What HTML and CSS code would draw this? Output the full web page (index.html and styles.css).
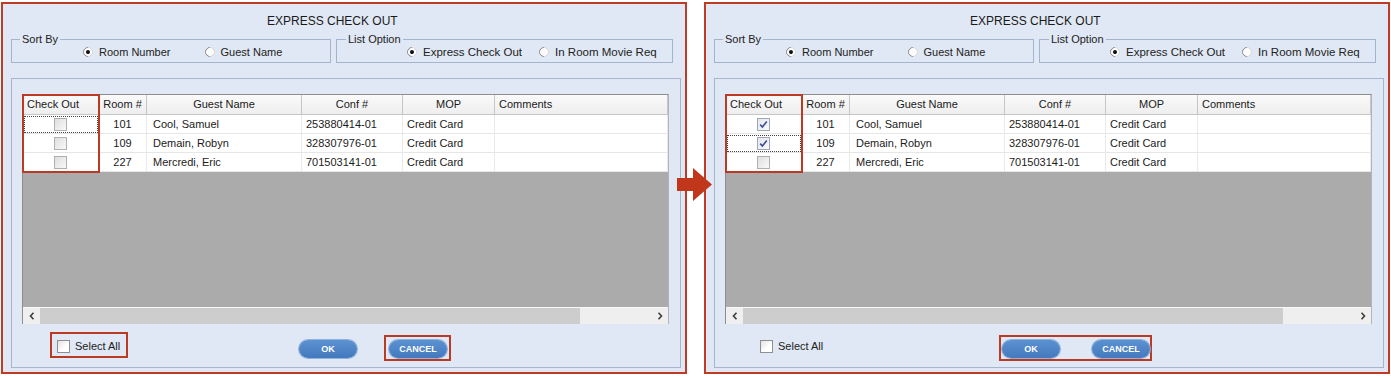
FILE: index.html
```html
<!DOCTYPE html>
<html>
<head>
<meta charset="utf-8">
<title>Express Check Out</title>
<link rel="stylesheet" href="styles.css">
</head>
<body>
<div class="stage">
  <section class="panel">
    <div class="title">EXPRESS CHECK OUT</div>
    <div class="options">
      <fieldset class="group sort">
        <legend>Sort By</legend>
        <div class="radios">
          <span class="radio"><span class="dot on"></span>Room Number</span>
          <span class="radio"><span class="dot"></span>Guest Name</span>
        </div>
      </fieldset>
      <fieldset class="group list">
        <legend>List Option</legend>
        <div class="radios">
          <span class="radio"><span class="dot on"></span>Express Check Out</span>
          <span class="radio"><span class="dot"></span>In Room Movie Req</span>
        </div>
      </fieldset>
    </div>
    <div class="body">
      <div class="grid">
        <div class="row head">
          <div class="cell left">Check Out</div>
          <div class="cell">Room #</div>
          <div class="cell">Guest Name</div>
          <div class="cell">Conf #</div>
          <div class="cell">MOP</div>
          <div class="cell left">Comments</div>
        </div>
        <div class="row">
          <div class="cell chk focus"><span class="box"></span></div>
          <div class="cell num">101</div>
          <div class="cell txt">Cool, Samuel</div>
          <div class="cell txt">253880414-01</div>
          <div class="cell txt">Credit Card</div>
          <div class="cell txt"></div>
        </div>
        <div class="row">
          <div class="cell chk"><span class="box"></span></div>
          <div class="cell num">109</div>
          <div class="cell txt">Demain, Robyn</div>
          <div class="cell txt">328307976-01</div>
          <div class="cell txt">Credit Card</div>
          <div class="cell txt"></div>
        </div>
        <div class="row">
          <div class="cell chk"><span class="box"></span></div>
          <div class="cell num">227</div>
          <div class="cell txt">Mercredi, Eric</div>
          <div class="cell txt">701503141-01</div>
          <div class="cell txt">Credit Card</div>
          <div class="cell txt"></div>
        </div>
        <div class="empty"></div>
        <div class="hscroll">
          <span class="sb-btn"><svg width="6" height="8" viewBox="0 0 6 8"><polyline points="4.5,0.8 1.5,4 4.5,7.2" fill="none" stroke="#3c3c3c" stroke-width="1.6"/></svg></span>
          <span class="thumb"></span>
          <span class="track"></span>
          <span class="sb-btn"><svg width="6" height="8" viewBox="0 0 6 8"><polyline points="1.5,0.8 4.5,4 1.5,7.2" fill="none" stroke="#3c3c3c" stroke-width="1.6"/></svg></span>
        </div>
        <div class="mark"></div>
      </div>
      <div class="footer">
        <label class="selall marked"><span class="cb"></span>Select All</label>
        <span class="btn ok-solo">OK</span>
        <span class="btnwrap marked single"><span class="btn">CANCEL</span></span>
      </div>
    </div>
  </section>

  <svg class="arrow" width="36" height="35" viewBox="0 0 36 35"><path d="M0 11 H16 V1 L35 17.5 L16 34 V24 H0 Z" fill="#c1371c"/></svg>

  <section class="panel second">
    <div class="title">EXPRESS CHECK OUT</div>
    <div class="options">
      <fieldset class="group sort">
        <legend>Sort By</legend>
        <div class="radios">
          <span class="radio"><span class="dot on"></span>Room Number</span>
          <span class="radio"><span class="dot"></span>Guest Name</span>
        </div>
      </fieldset>
      <fieldset class="group list">
        <legend>List Option</legend>
        <div class="radios">
          <span class="radio"><span class="dot on"></span>Express Check Out</span>
          <span class="radio"><span class="dot"></span>In Room Movie Req</span>
        </div>
      </fieldset>
    </div>
    <div class="body">
      <div class="grid">
        <div class="row head">
          <div class="cell left">Check Out</div>
          <div class="cell">Room #</div>
          <div class="cell">Guest Name</div>
          <div class="cell">Conf #</div>
          <div class="cell">MOP</div>
          <div class="cell left">Comments</div>
        </div>
        <div class="row">
          <div class="cell chk"><span class="box checked"><svg width="11" height="11" viewBox="0 0 11 11"><polyline points="2.2,5.6 4.4,8 8.8,2.6" fill="none" stroke="#3b4c9b" stroke-width="1.6"/></svg></span></div>
          <div class="cell num">101</div>
          <div class="cell txt">Cool, Samuel</div>
          <div class="cell txt">253880414-01</div>
          <div class="cell txt">Credit Card</div>
          <div class="cell txt"></div>
        </div>
        <div class="row">
          <div class="cell chk focus"><span class="box checked"><svg width="11" height="11" viewBox="0 0 11 11"><polyline points="2.2,5.6 4.4,8 8.8,2.6" fill="none" stroke="#3b4c9b" stroke-width="1.6"/></svg></span></div>
          <div class="cell num">109</div>
          <div class="cell txt">Demain, Robyn</div>
          <div class="cell txt">328307976-01</div>
          <div class="cell txt">Credit Card</div>
          <div class="cell txt"></div>
        </div>
        <div class="row">
          <div class="cell chk"><span class="box"></span></div>
          <div class="cell num">227</div>
          <div class="cell txt">Mercredi, Eric</div>
          <div class="cell txt">701503141-01</div>
          <div class="cell txt">Credit Card</div>
          <div class="cell txt"></div>
        </div>
        <div class="empty"></div>
        <div class="hscroll">
          <span class="sb-btn"><svg width="6" height="8" viewBox="0 0 6 8"><polyline points="4.5,0.8 1.5,4 4.5,7.2" fill="none" stroke="#3c3c3c" stroke-width="1.6"/></svg></span>
          <span class="thumb"></span>
          <span class="track"></span>
          <span class="sb-btn"><svg width="6" height="8" viewBox="0 0 6 8"><polyline points="1.5,0.8 4.5,4 1.5,7.2" fill="none" stroke="#3c3c3c" stroke-width="1.6"/></svg></span>
        </div>
        <div class="mark"></div>
      </div>
      <div class="footer">
        <label class="selall"><span class="cb"></span>Select All</label>
        <span class="btnwrap marked pair"><span class="btn">OK</span><span class="btn">CANCEL</span></span>
      </div>
    </div>
  </section>
</div>
</body>
</html>
```

FILE: styles.css
```css
body {
  margin: 0;
  background: #ffffff;
  font-family: "Liberation Sans", Arial, sans-serif;
  color: #1b1b1b;
}

.stage {
  position: relative;
  display: flex;
  gap: 17px;
  padding: 2px 0 0 1px;
}

.panel {
  box-sizing: border-box;
  width: 686px;
  height: 372px;
  border: 2px solid #bf3b25;
  background: #dfe8f4;
  padding: 10px 0 0 8px;
}

.title {
  font-size: 12px;
  line-height: 14px;
  margin-left: 256px;
  color: #1a1a1a;
}

.options {
  display: flex;
  gap: 5px;
  margin-top: 5px;
}

.group {
  margin: 0;
  min-width: 0;
  box-sizing: border-box;
  border: 1px solid #a3b5cc;
  padding: 0 0 4px 8px;
}

.group legend {
  padding: 0 2px;
  font-size: 11px;
  line-height: 13px;
  color: #222;
}

.sort { width: 320px; }
.list { width: 337px; padding-left: 9px; }

.radios {
  display: flex;
  align-items: center;
  height: 12px;
  font-size: 11px;
  color: #222;
}

.sort .radios { padding-left: 63px; gap: 34px; }
.list .radios { padding-left: 61px; gap: 17px; font-size: 11.5px; }

.radio {
  display: flex;
  align-items: center;
  gap: 6px;
  white-space: nowrap;
}

.dot {
  position: relative;
  box-sizing: border-box;
  width: 10px;
  height: 10px;
  border-radius: 50%;
  border: 1px solid;
  border-color: #8a8a8a #d6d6d6 #d6d6d6 #8a8a8a;
  transform: rotate(-45deg);
  background: #fbfbfb;
}

.dot.on::after {
  content: "";
  position: absolute;
  left: 2px;
  top: 2px;
  width: 4px;
  height: 4px;
  border-radius: 50%;
  background: #111;
}

.body {
  box-sizing: border-box;
  width: 670px;
  height: 290px;
  margin-top: 15px;
  border: 1px solid #a6b7cd;
  padding: 15px 0 0 10px;
}

.grid {
  position: relative;
  box-sizing: border-box;
  width: 647px;
  height: 230px;
  border: 1px solid #8e8e8e;
  border-right-color: #b4b4b4;
  border-bottom: 0;
  display: flex;
  flex-direction: column;
  background: #ababab;
}

.row {
  display: grid;
  grid-template-columns: 76px 48px 155px 101px 92px 1fr;
  background: #ffffff;
  font-size: 11px;
}

.cell {
  box-sizing: border-box;
  line-height: 18px;
  height: 19px;
  border-bottom: 1px solid #e6e6e6;
  border-right: 1px solid #e9e9e9;
  padding: 0 4px;
  white-space: nowrap;
  overflow: hidden;
}

.head .cell {
  height: 20px;
  line-height: 19px;
  background: linear-gradient(#fafafa, #eeeeee);
  border-right-color: #c6c6c6;
  border-bottom-color: #c6c6c6;
  text-align: center;
  color: #1a1a1a;
}

.head .cell.left { text-align: left; }

.num { text-align: center; }
.txt { padding-left: 4px; }
.row .txt:nth-child(3) { padding-left: 6px; }

.chk {
  display: flex;
  align-items: center;
  justify-content: center;
}

.focus {
  outline: 1px dotted #444;
  outline-offset: -2px;
}

.box {
  box-sizing: border-box;
  width: 13px;
  height: 13px;
  border: 1px solid #b0b0b0;
  background: linear-gradient(135deg, #dedede, #f9f9f9);
  display: flex;
  align-items: center;
  justify-content: center;
}

.box.checked {
  border-color: #9ea6b8;
  background: linear-gradient(135deg, #e4e6ec, #fafafa);
}

.empty { flex: 1; }

.hscroll {
  display: flex;
  height: 16px;
  background: #efefef;
  border-top: 1px solid #f7f7f7;
}

.sb-btn {
  width: 17px;
  display: flex;
  align-items: center;
  justify-content: center;
}

.thumb {
  width: 540px;
  background: #cdcdcd;
}

.track { flex: 1; }

.mark {
  position: absolute;
  left: -1px;
  top: -1px;
  width: 78px;
  height: 79px;
  box-sizing: border-box;
  border: 2px solid #bb3a23;
}

.footer {
  display: flex;
  align-items: flex-start;
  margin-top: 8px;
}

.selall {
  box-sizing: border-box;
  width: 78px;
  height: 26px;
  margin-left: 28px;
  border: 2px solid transparent;
  padding: 2px 0 0 5px;
  display: flex;
  align-items: center;
  gap: 5px;
  font-size: 11px;
  color: #222;
}

.marked { border-color: #bb3a23; }

.cb {
  box-sizing: border-box;
  width: 13px;
  height: 13px;
  border: 1px solid #8f8f8f;
  background: linear-gradient(135deg, #e2e2e2, #ffffff 60%);
}

.btn {
  box-sizing: border-box;
  width: 58px;
  height: 18px;
  border-radius: 9px;
  background: linear-gradient(#5b92d1, #4479bd);
  box-shadow: 0 0 0 1px #8fb2dc;
  color: #ffffff;
  font-size: 9px;
  font-weight: bold;
  line-height: 18px;
  text-align: center;
}

.ok-solo {
  margin-left: 171px;
  margin-top: 8px;
}

.btnwrap {
  display: flex;
  border: 2px solid transparent;
}

.btnwrap.marked { border-color: #bb3a23; }

.single {
  margin-left: 27px;
  margin-top: 3px;
  padding: 3px 2px 1px 3px;
}

.pair {
  margin-left: 168px;
  margin-top: 3px;
  padding: 3px 0 1px 1px;
  gap: 32px;
}

.arrow {
  position: absolute;
  left: 677px;
  top: 167px;
}
```
